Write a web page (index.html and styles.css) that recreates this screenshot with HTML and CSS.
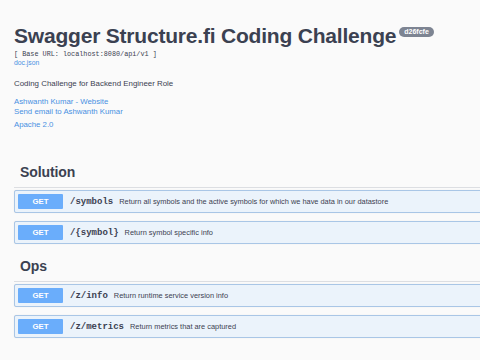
FILE: index.html
```html
<!DOCTYPE html>
<html>
<head>
<meta charset="utf-8">
<link rel="stylesheet" href="styles.css">
</head>
<body>
<div class="page">
  <div class="info">
    <div class="title-row">
      <h1 class="title">Swagger Structure.fi Coding Challenge</h1>
      <span class="version">d26fcfe</span>
    </div>
    <div class="base-url">[ Base URL: localhost:8080/api/v1 ]</div>
    <a class="link doc" href="#">doc.json</a>
    <p class="desc">Coding Challenge for Backend Engineer Role</p>
    <div class="contact">
      <a class="link" href="#">Ashwanth Kumar - Website</a>
      <a class="link" href="#">Send email to Ashwanth Kumar</a>
    </div>
    <a class="link license" href="#">Apache 2.0</a>
  </div>

  <section class="tag">
    <h2 class="tag-title">Solution</h2>
    <div class="ops">
      <div class="op"><span class="method">GET</span><span class="path">/symbols</span><span class="summary">Return all symbols and the active symbols for which we have data in our datastore</span></div>
      <div class="op"><span class="method">GET</span><span class="path">/{symbol}</span><span class="summary">Return symbol specific info</span></div>
    </div>
  </section>

  <section class="tag">
    <h2 class="tag-title">Ops</h2>
    <div class="ops">
      <div class="op"><span class="method">GET</span><span class="path">/z/info</span><span class="summary">Return runtime service version info</span></div>
      <div class="op"><span class="method">GET</span><span class="path">/z/metrics</span><span class="summary">Return metrics that are captured</span></div>
    </div>
  </section>
</div>
</body>
</html>
```
FILE: styles.css
```css
html, body {
  margin: 0;
  padding: 0;
  background: #fafafa;
  overflow: hidden;
}
body {
  font-family: "Liberation Sans", Arial, sans-serif;
  color: #3b4151;
  width: 480px;
  height: 360px;
}
.page {
  padding: 22px 0 0 14px;
}
.info {
  display: flex;
  flex-direction: column;
  align-items: flex-start;
}
.title-row {
  display: flex;
  align-items: flex-start;
}
.title {
  margin: 0;
  font-size: 21px;
  line-height: 28px;
  font-weight: bold;
  color: #3b4151;
  letter-spacing: -0.2px;
}
.version {
  margin: 5px 0 0 3px;
  background: #7d8492;
  color: #fff;
  font-size: 7px;
  font-weight: bold;
  line-height: 10px;
  height: 10px;
  padding: 0 5px;
  border-radius: 6px;
}
.base-url {
  font-family: "Liberation Mono", "Courier New", monospace;
  font-size: 6.8px;
  line-height: 8px;
  color: #3b4151;
}
.link {
  color: #4990e2;
  text-decoration: none;
  font-size: 7.8px;
  line-height: 10px;
}
.doc {
  font-size: 6.8px;
  line-height: 10px;
}
.desc {
  margin: 11px 0 0;
  font-size: 7.9px;
  line-height: 10px;
}
.contact {
  display: flex;
  flex-direction: column;
  margin-top: 8px;
}
.license {
  margin-top: 3px;
}
.tag:first-of-type {
  margin-top: 33px;
}
.tag-title {
  margin: 0;
  padding: 0 0 6px 6px;
  font-size: 14px;
  line-height: 18px;
  font-weight: bold;
  color: #3b4151;
  letter-spacing: -0.1px;
  border-bottom: 1px solid #dcdee2;
}
.ops {
  display: flex;
  flex-direction: column;
  gap: 8px;
  margin-top: 2px;
  width: 490px;
  padding-bottom: 13px;
}
.op {
  display: flex;
  align-items: center;
  height: 21px;
  background: #ebf3fb;
  border: 1px solid #a9c6e6;
  border-radius: 2px;
  padding: 0 3px;
  box-shadow: 0 0 1px rgba(0, 0, 0, 0.12);
}
.method {
  width: 45px;
  height: 15px;
  line-height: 15px;
  background: #6aadfb;
  color: #fff;
  font-weight: bold;
  font-size: 7.8px;
  text-align: center;
  border-radius: 1px;
  flex: none;
}
.path {
  margin-left: 7px;
  font-family: "Liberation Mono", "Courier New", monospace;
  font-weight: bold;
  font-size: 9px;
  color: #3b4151;
  flex: none;
}
.summary {
  margin-left: 6px;
  font-size: 7.4px;
  color: #3b4151;
  white-space: nowrap;
}
```
